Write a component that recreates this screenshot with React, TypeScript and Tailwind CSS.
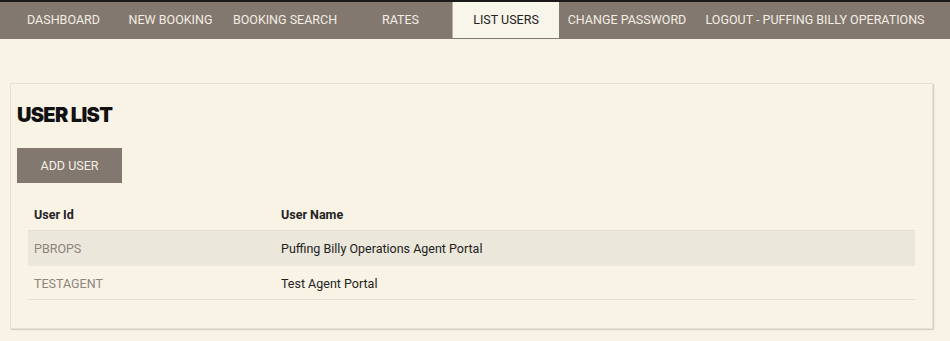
import React from 'react';

const navItems = [
  { label: 'DASHBOARD', width: 'w-[113px]' },
  { label: 'NEW BOOKING', width: 'w-[101px]' },
  { label: 'BOOKING SEARCH', width: 'w-[128px]' },
  { label: 'RATES', width: 'w-[103px]' },
  { label: 'LIST USERS', width: 'w-[107px]', active: true },
  { label: 'CHANGE PASSWORD', width: 'w-[136px]' },
  { label: 'LOGOUT - PUFFING BILLY OPERATIONS', width: 'w-[240px]' },
];

const users = [
  { id: 'PBROPS', name: 'Puffing Billy Operations Agent Portal' },
  { id: 'TESTAGENT', name: 'Test Agent Portal' },
];

export default function App() {
  return (
    <div className="min-h-[341px] bg-[#f9f3e6] font-['Roboto',sans-serif] text-[#222]">
      <nav className="flex h-[39px] border-t-2 border-[#1c1a18] bg-[#827870] pl-[7px]">
        {navItems.map((item) => (
          <div
            key={item.label}
            className={`${item.width} flex h-[36px] shrink-0 items-center justify-center whitespace-nowrap text-[12.5px] ${
              item.active ? 'border-l border-[#b8b0a4] bg-[#f8f5ea] text-[#222]' : 'text-[#f3ede2]'
            }`}
          >
            {item.label}
          </div>
        ))}
      </nav>

      <div className="mx-[10px] mt-[44px] w-[923px] border border-[#e6e1d4] px-[6px] pb-[28px] pt-[19px] shadow-[1px_1px_1px_#d6d1c4]">
        <h1 className="font-['Inter',sans-serif] text-[20px] font-black leading-[24px] tracking-[-0.035em] text-[#111]">
          USER LIST
        </h1>
        <button className="mt-[21px] flex h-[35px] w-[105px] items-center justify-center bg-[#827870] pt-[1px] text-[12.5px] text-[#f5efe4]">
          ADD USER
        </button>
        <div className="ml-[11px] mr-[11px] mt-[17px] text-[12.5px]">
          <div className="flex h-[30px] items-center font-bold">
            <div className="w-[253px] pl-[6px]">User Id</div>
            <div>User Name</div>
          </div>
          {users.map((u, i) => (
            <div
              key={u.id}
              className={`flex items-center ${
                i === 0 ? 'h-[36px] border-t border-[#e0ddd2] bg-[#ebe7da] pt-[1px]' : 'h-[34px] border-b border-[#e4e0d5] pt-[3px]'
              }`}
            >
              <div className="w-[253px] pl-[6px] text-[#8c847b]">{u.id}</div>
              <div>{u.name}</div>
            </div>
          ))}
        </div>
      </div>
    </div>
  );
}
